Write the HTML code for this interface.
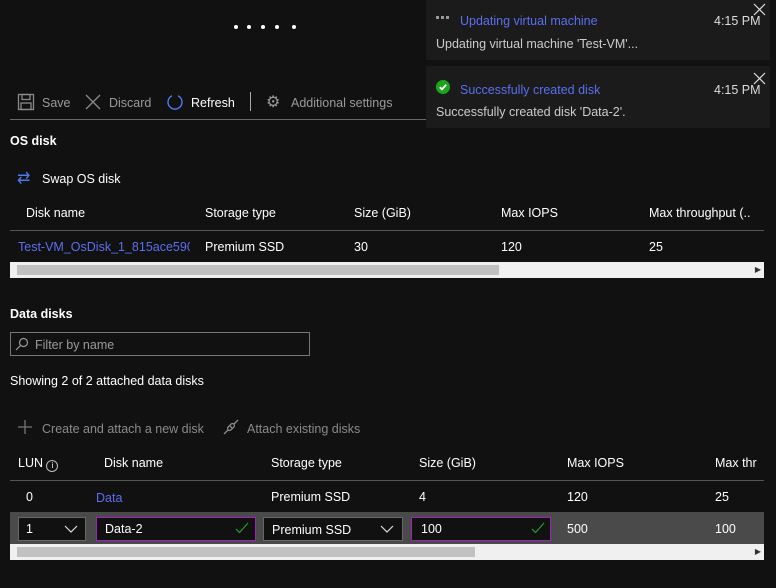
<!DOCTYPE html>
<html><head><meta charset="utf-8"><style>
*{margin:0;padding:0;box-sizing:border-box}
body{width:776px;height:588px;background:#111;color:#fff;font-family:"Liberation Sans",sans-serif;font-size:12.5px;position:relative;overflow:hidden}
.a{position:absolute;white-space:nowrap}
.g{color:#9a9a9a}
.lnk{color:#5b6ef0}
.b{font-weight:bold}
.line{position:absolute;height:1px;background:#555}
.sb{position:absolute;height:16px;background:#f0f0f0}
.sb .th{position:absolute;top:3px;height:10px;background:#c1c1c1}
.box{position:absolute;height:24px;background:#111;border:1px solid #666}
.pur{border-color:#a020c0}
.dot{position:absolute;top:25px;width:4px;height:4px;border-radius:50%;background:#fff}
</style></head><body>
<div class="dot" style="left:234px"></div><div class="dot" style="left:247px"></div><div class="dot" style="left:261px"></div><div class="dot" style="left:275px"></div><div class="dot" style="left:292px"></div>

<!-- toolbar -->
<svg class="a" style="left:17px;top:93px" width="18" height="18" viewBox="0 0 18 18" fill="none" stroke="#8a8a8a" stroke-width="1.3"><rect x="1.5" y="1.5" width="15" height="15"/><rect x="5" y="1.5" width="8" height="5"/><rect x="4" y="10" width="10" height="6.5"/></svg>
<div class="a g" style="left:42px;top:96px">Save</div>
<svg class="a" style="left:84px;top:93px" width="18" height="18" stroke="#8a8a8a" stroke-width="1.3"><path d="M2 2L16 16M16 2L2 16"/></svg>
<div class="a g" style="left:109px;top:96px">Discard</div>
<svg class="a" style="left:166px;top:93px" width="18" height="18" fill="none" stroke="#4a7cf0" stroke-width="1.4"><path d="M6 2.8A7 7 0 1 0 12 2.8"/></svg>
<div class="a" style="left:191px;top:96px">Refresh</div>
<div class="a" style="left:250px;top:92px;width:1px;height:19px;background:#aaa"></div>
<div class="a g" style="left:266px;top:92px;font-size:16px">⚙</div>
<div class="a g" style="left:291px;top:96px">Additional settings</div>
<div class="line" style="left:10px;top:119px;width:416px;background:#666"></div>

<div class="a b" style="left:10px;top:134px">OS disk</div>
<div class="a" style="left:17px;top:168px;color:#4a7cf0;font-size:16px">⇄</div>
<div class="a" style="left:42px;top:172px">Swap OS disk</div>

<div class="a" style="left:26px;top:206px">Disk name</div>
<div class="a" style="left:205px;top:206px">Storage type</div>
<div class="a" style="left:354px;top:206px">Size (GiB)</div>
<div class="a" style="left:501px;top:206px">Max IOPS</div>
<div class="a" style="left:649px;top:206px">Max throughput (..</div>
<div class="line" style="left:10px;top:230px;width:754px"></div>
<div class="a lnk" style="left:18px;top:240px;width:172px;overflow:hidden">Test-VM_OsDisk_1_815ace590</div>
<div class="a" style="left:205px;top:240px">Premium SSD</div>
<div class="a" style="left:354px;top:240px">30</div>
<div class="a" style="left:501px;top:240px">120</div>
<div class="a" style="left:649px;top:240px">25</div>
<div class="sb" style="left:10px;top:262px;width:754px"><div class="th" style="left:7px;width:482px"></div><span class="a" style="right:3px;top:3px;font-size:8px;color:#333">▶</span></div>

<div class="a b" style="left:10px;top:307px">Data disks</div>
<div class="a" style="left:10px;top:332px;width:300px;height:24px;border:1px solid #777"></div>
<svg class="a" style="left:15px;top:337px" width="14" height="14" fill="none" stroke="#999" stroke-width="1.2"><circle cx="8.5" cy="5.5" r="4"/><path d="M5.5 8.5L1 13"/></svg>
<div class="a g" style="left:35px;top:338px">Filter by name</div>
<div class="a" style="left:10px;top:374px">Showing 2 of 2 attached data disks</div>

<svg class="a" style="left:17px;top:419px" width="16" height="16" stroke="#777" stroke-width="1.3"><path d="M8 1V15M1 8H15"/></svg>
<div class="a" style="left:42px;top:422px;color:#8a8a8a">Create and attach a new disk</div>
<svg class="a" style="left:222px;top:418px" width="18" height="18" fill="none" stroke="#8a8a8a" stroke-width="1.3"><path d="M2 16L6 12M16 2L12 6"/><rect x="5" y="7" width="8" height="4" rx="2" transform="rotate(-45 9 9)"/><path d="M8 8L10 10"/></svg>
<div class="a" style="left:247px;top:422px;color:#8a8a8a">Attach existing disks</div>

<div class="a" style="left:18px;top:456px">LUN <span style="display:inline-block;width:12px;height:12px;border:1px solid #bbb;border-radius:50%;font-size:8px;text-align:center;line-height:10px;vertical-align:-1px">i</span></div>
<div class="a" style="left:104px;top:456px">Disk name</div>
<div class="a" style="left:271px;top:456px">Storage type</div>
<div class="a" style="left:419px;top:456px">Size (GiB)</div>
<div class="a" style="left:567px;top:456px">Max IOPS</div>
<div class="a" style="left:715px;top:456px">Max thr</div>
<div class="line" style="left:10px;top:480px;width:754px"></div>
<div class="a" style="left:26px;top:490px">0</div>
<div class="a lnk" style="left:96px;top:491px">Data</div>
<div class="a" style="left:271px;top:490px">Premium SSD</div>
<div class="a" style="left:419px;top:490px">4</div>
<div class="a" style="left:567px;top:490px">120</div>
<div class="a" style="left:715px;top:490px">25</div>
<div class="a" style="left:10px;top:512px;width:754px;height:32px;background:#4a4a4a"></div>
<div class="box" style="left:18px;top:517px;width:68px"></div>
<div class="a" style="left:26px;top:522px">1</div>
<svg class="a" style="left:64px;top:524px" width="14" height="10" fill="none" stroke="#ddd" stroke-width="1.2"><path d="M1 2L7 8L13 2"/></svg>
<div class="box pur" style="left:96px;top:517px;width:160px"></div>
<div class="a" style="left:105px;top:522px">Data-2</div>
<svg class="a" style="left:235px;top:522px" width="14" height="12" fill="none" stroke="#2a9a2a" stroke-width="1.2"><path d="M1 7L4.5 10.5L13 1"/></svg>
<div class="box" style="left:263px;top:517px;width:140px"></div>
<div class="a" style="left:272px;top:523px">Premium SSD</div>
<svg class="a" style="left:380px;top:524px" width="14" height="10" fill="none" stroke="#ddd" stroke-width="1.2"><path d="M1 2L7 8L13 2"/></svg>
<div class="box pur" style="left:411px;top:517px;width:140px"></div>
<div class="a" style="left:421px;top:522px">100</div>
<svg class="a" style="left:531px;top:522px" width="14" height="12" fill="none" stroke="#2a9a2a" stroke-width="1.2"><path d="M1 7L4.5 10.5L13 1"/></svg>
<div class="a" style="left:567px;top:522px">500</div>
<div class="a" style="left:715px;top:522px">100</div>
<div class="sb" style="left:10px;top:544px;width:754px"><div class="th" style="left:7px;width:458px"></div><span class="a" style="right:3px;top:3px;font-size:8px;color:#333">▶</span></div>

<!-- notifications -->
<div class="a" style="left:426px;top:0;width:344px;height:60px;background:#1b1b1b"></div>
<div class="a" style="left:426px;top:66px;width:344px;height:62px;background:#1b1b1b"></div>
<div class="a" style="left:436px;top:16px;width:3px;height:3px;background:#999"></div>
<div class="a" style="left:441px;top:16px;width:3px;height:3px;background:#999"></div>
<div class="a" style="left:446px;top:16px;width:3px;height:3px;background:#999"></div>
<div class="a lnk" style="left:460px;top:14px">Updating virtual machine</div>
<div class="a" style="left:714px;top:14px;color:#ddd">4:15 PM</div>
<div class="a" style="left:436px;top:37px;color:#ccc">Updating virtual machine 'Test-VM'...</div>
<svg class="a" style="left:753px;top:3px" width="13" height="13" stroke="#ddd" stroke-width="1.2"><path d="M1 1L12 12M12 1L1 12"/></svg>
<svg class="a" style="left:436px;top:80px" width="14" height="14"><circle cx="7" cy="7" r="7" fill="#1aa51a"/><path d="M3.8 7.2L6 9.3L10.2 4.8" stroke="#fff" stroke-width="1.8" fill="none"/></svg>
<div class="a lnk" style="left:460px;top:83px">Successfully created disk</div>
<div class="a" style="left:714px;top:83px;color:#ddd">4:15 PM</div>
<div class="a" style="left:436px;top:105px;color:#ccc">Successfully created disk 'Data-2'.</div>
<svg class="a" style="left:753px;top:72px" width="13" height="13" stroke="#ddd" stroke-width="1.2"><path d="M1 1L12 12M12 1L1 12"/></svg>
</body></html>
